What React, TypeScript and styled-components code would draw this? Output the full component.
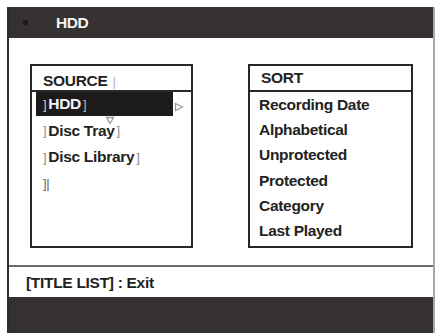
import React from "react";
import styled, { createGlobalStyle } from "styled-components";

const Global = createGlobalStyle`
  html, body { margin: 0; padding: 0; background: #ffffff; }
  body { font-family: "Liberation Sans", Arial, sans-serif; }
`;

const Frame = styled.div`
  margin: 7px 0 0 7px;
  width: 428px;
  height: 326px;
  box-sizing: border-box;
  border-left: 2px solid #2e2a2a;
  border-right: 2px solid #a9a9a9;
  display: flex;
  flex-direction: column;
  background: #ffffff;
`;

const Header = styled.div`
  height: 31px;
  flex: none;
  background: #353131;
  display: flex;
  align-items: center;
  padding-left: 14px;
  gap: 28px;
`;

const Dot = styled.span`
  width: 5px;
  height: 5px;
  border-radius: 50%;
  background: #1c1919;
  flex: none;
`;

const Title = styled.span`
  color: #f3f3f3;
  font-weight: 700;
  font-size: 15.5px;
  letter-spacing: -0.4px;
`;

const Body = styled.div`
  height: 227px;
  flex: none;
  box-sizing: border-box;
  padding: 26px 0 0 21px;
  display: flex;
  gap: 55px;
  align-items: flex-start;
`;

const Box = styled.div<{ $w: number }>`
  position: relative;
  width: ${(p) => p.$w}px;
  height: 184px;
  box-sizing: border-box;
  border: 2px solid #2a2727;
  display: flex;
  flex-direction: column;
`;

const BoxHead = styled.div<{ $pad: number }>`
  height: 26px;
  flex: none;
  box-sizing: border-box;
  border-bottom: 2px solid #2a2727;
  display: flex;
  align-items: center;
  padding: ${(p) => p.$pad}px 0 0 11px;
  font-weight: 700;
  font-size: 15.5px;
  letter-spacing: -0.3px;
  color: #222;
  gap: 5px;
`;

const Faint = styled.span<{ $c?: string }>`
  font-weight: 400;
  font-size: 13px;
  color: ${(p) => p.$c || "#8a8a8a"};
`;

const SourceList = styled.div`
  display: flex;
  flex-direction: column;
`;

const SourceRow = styled.div<{ $sel?: boolean }>`
  height: 24px;
  margin: 0 0 2.5px 4px;
  width: 137px;
  box-sizing: border-box;
  display: flex;
  align-items: center;
  padding-left: 7px;
  gap: 2px;
  font-weight: 700;
  font-size: 15.5px;
  letter-spacing: -0.3px;
  background: ${(p) => (p.$sel ? "#1d1a1a" : "transparent")};
  color: ${(p) => (p.$sel ? "#f4f4f4" : "#222")};
`;

const Under = styled.span`
  font-weight: 400;
  font-size: 13px;
  color: #666;
  text-decoration: underline;
`;

const SortList = styled.div`
  display: flex;
  flex-direction: column;
`;

const SortRow = styled.div`
  height: 25.3px;
  display: flex;
  align-items: center;
  padding-left: 9px;
  font-weight: 700;
  font-size: 15.5px;
  letter-spacing: -0.3px;
  color: #222;
`;

const Marker = styled.svg<{ $x: number; $y: number }>`
  position: absolute;
  left: ${(p) => p.$x}px;
  top: ${(p) => p.$y}px;
`;

const Divider = styled.div`
  height: 0;
  border-top: 2px solid #6d6d6d;
  flex: none;
`;

const Footer = styled.div`
  height: 30px;
  flex: none;
  display: flex;
  align-items: center;
  padding: 2px 0 0 17px;
  box-sizing: border-box;
  font-weight: 700;
  font-size: 15.5px;
  letter-spacing: -0.3px;
  color: #222;
`;

const BottomBar = styled.div`
  flex: 1;
  background: #353131;
`;

const sortItems = [
  "Recording Date",
  "Alphabetical",
  "Unprotected",
  "Protected",
  "Category",
  "Last Played",
];

export default function App() {
  return (
    <>
      <Global />
      <Frame>
        <Header>
          <Dot />
          <Title>HDD</Title>
        </Header>
        <Body>
          <Box $w={163}>
            <BoxHead $pad={6}>
              SOURCE<Faint $c="#b5b5b5">|</Faint>
            </BoxHead>
            <SourceList>
              <SourceRow $sel>
                <Faint $c="#cfcfcf">]</Faint>HDD<Faint $c="#bdbdbd">]</Faint>
              </SourceRow>
              <SourceRow>
                <Faint>]</Faint> Disc Tray<Faint>]</Faint>
              </SourceRow>
              <SourceRow>
                <Faint>]</Faint> Disc Library<Faint>]</Faint>
              </SourceRow>
              <SourceRow>
                <Under>]|</Under>
              </SourceRow>
            </SourceList>
            <Marker $x={142} $y={36} width="10" height="10" viewBox="0 0 10 10">
              <path d="M1.5 1.5 L8.5 5 L1.5 8.5 Z" fill="#ffffff" stroke="#9a9a9a" strokeWidth="1.3" />
            </Marker>
            <Marker $x={73} $y={50} width="10" height="9" viewBox="0 0 10 9">
              <path d="M1.5 1.5 L8.5 1.5 L5 7.5 Z" fill="#ffffff" stroke="#9a9a9a" strokeWidth="1.3" />
            </Marker>
          </Box>
          <Box $w={165}>
            <BoxHead $pad={0}>SORT</BoxHead>
            <SortList>
              {sortItems.map((s) => (
                <SortRow key={s}>{s}</SortRow>
              ))}
            </SortList>
          </Box>
        </Body>
        <Divider />
        <Footer>[TITLE LIST] : Exit</Footer>
        <BottomBar />
      </Frame>
    </>
  );
}
